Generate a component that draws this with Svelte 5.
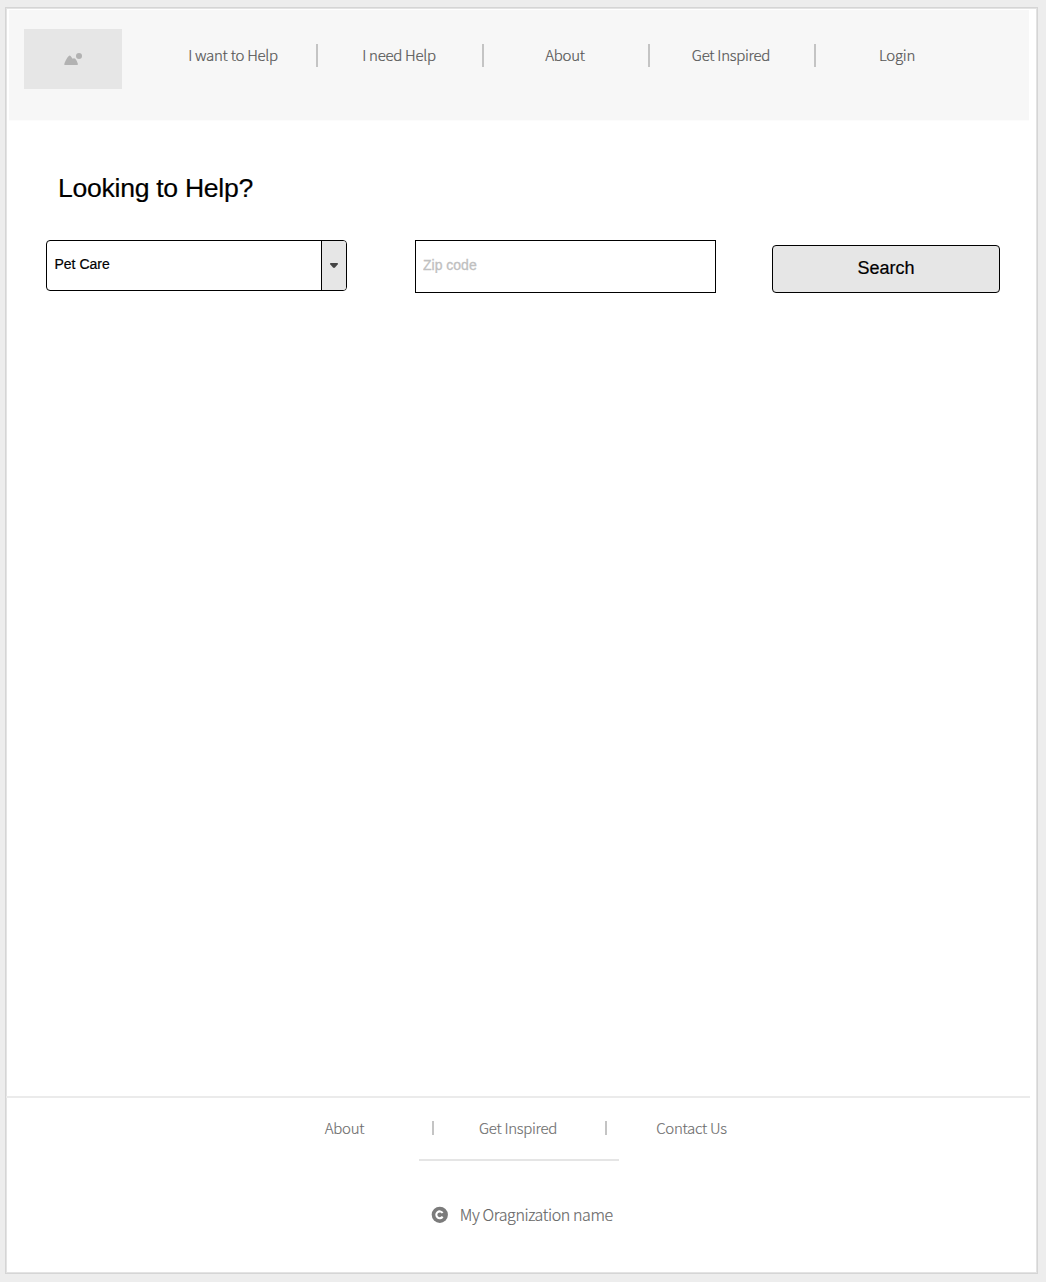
<script>
  const mainLinks = ['I want to Help', 'I need Help', 'About', 'Get Inspired', 'Login'];
  const footerLinks = ['About', 'Get Inspired', 'Contact Us'];
</script>

<div class="page">
  <header>
    <div class="logo">
      <svg width="18" height="12" viewBox="0 0 18 12" aria-hidden="true">
        <circle cx="15" cy="3" r="3" />
        <path d="M0.2 11.2 C1 8.4 3 4.6 4.8 2.9 Q5.7 2.1 6.6 3 L8.6 5.8 Q10 4.8 11.3 5.8 Q13.4 8.2 14 11.2 Q13.8 12 13 12 H1 Q0.1 12 0.2 11.2Z" />
      </svg>
    </div>
    <nav class="main-nav">
      {#each mainLinks as link}
        <span class="main-link">{link}</span>
      {/each}
    </nav>
  </header>

  <main>
    <h1>Looking to Help?</h1>
    <div class="search-row">
      <div class="select">
        <span class="value">Pet Care</span>
        <span class="toggle">
          <svg width="8" height="5" viewBox="0 0 8 5" aria-hidden="true">
            <path d="M0.7 0 H7.3 Q8.3 0.3 7.8 1.2 L5 4.5 Q4 5.3 3 4.5 L0.2 1.2 Q-0.3 0.3 0.7 0Z" />
          </svg>
        </span>
      </div>
      <input type="text" placeholder="Zip code" aria-label="Zip code" />
      <button type="button">Search</button>
    </div>
  </main>

  <footer>
    <nav class="footer-nav">
      {#each footerLinks as link}
        <span class="footer-link">{link}</span>
      {/each}
    </nav>
    <div class="rule"></div>
    <div class="copyright">
      <svg width="17" height="17" viewBox="0 0 17 17" aria-hidden="true">
        <circle cx="8.8" cy="8.8" r="8.1" fill="#7b7b7b" />
        <path d="M11.6 7 A3.4 3.4 0 1 0 11.6 10.6" fill="none" stroke="#fff" stroke-width="2.1" />
      </svg>
      <span>My Oragnization name</span>
    </div>
  </footer>
</div>

<style>
  :global(body) {
    margin: 0;
    background: #ededed;
  }

  .page {
    box-sizing: border-box;
    display: flex;
    flex-direction: column;
    width: 1033px;
    height: 1267px;
    margin: 7px 0 0 5px;
    border: 1px solid #d5d5d5;
    box-shadow: inset 0 0 0 1px #e3e3e3;
    background: #fff;
    font-family: 'Liberation Sans', Arial, sans-serif;
  }

  :global(#app) {
    display: flow-root;
  }

  header {
    box-sizing: border-box;
    display: flex;
    align-items: flex-start;
    width: 1020px;
    height: 110px;
    margin: 2px 0 0 3px;
    padding-left: 15px;
    background: #f7f7f7;
    border-bottom: 0;
    box-shadow: 0 1px 0 #fcfcfc;
  }

  .logo {
    display: flex;
    align-items: center;
    justify-content: center;
    width: 98px;
    height: 60px;
    margin-top: 19px;
    background: #e6e6e6;
  }

  .logo svg {
    fill: #b2b2b2;
  }

  .main-nav {
    display: flex;
    margin: 34px 0 0 28px;
  }

  .main-nav,
  .footer-nav,
  .copyright {
    font-family: 'Noto Sans CJK SC', 'Noto Sans', sans-serif;
    font-weight: 300;
    white-space: nowrap;
  }

  .main-link {
    box-sizing: border-box;
    width: 166px;
    height: 23px;
    padding-right: 2px;
    border-left: 2px solid #c4c4c4;
    color: #555;
    font-size: 15px;
    line-height: 22px;
    letter-spacing: -0.28px;
    text-align: center;
    -webkit-text-stroke: 0.2px #555;
  }

  .main-link:first-child {
    border-left-color: transparent;
  }

  main {
    flex: 1;
    padding: 51px 0 0 40px;
  }

  h1 {
    margin: 0 0 0 12px;
    color: #000;
    font-size: 26.6px;
    font-weight: 400;
    line-height: 34px;
    letter-spacing: -0.29px;
    -webkit-text-stroke: 0.2px #000;
  }

  .search-row {
    display: flex;
    align-items: flex-start;
    margin-top: 35px;
  }

  .select {
    box-sizing: border-box;
    display: flex;
    width: 301px;
    height: 51px;
    border: 1px solid #000;
    border-radius: 4px;
    overflow: hidden;
  }

  .value {
    flex: 1;
    padding-left: 7.5px;
    font-size: 14px;
    line-height: 47px;
    -webkit-text-stroke: 0.2px #000;
  }

  .toggle {
    display: flex;
    align-items: center;
    justify-content: center;
    width: 24px;
    border-left: 1px solid #000;
    background: #e6e6e6;
  }

  .toggle svg {
    fill: #444;
  }

  input {
    box-sizing: border-box;
    width: 301px;
    height: 53px;
    margin-left: 68px;
    padding: 0 8px 4px 7px;
    border: 1px solid #000;
    border-radius: 0;
    background: #fff;
    font: 14px 'Liberation Sans', Arial, sans-serif;
  }

  input::placeholder {
    color: #c0c0c0;
    opacity: 1;
    -webkit-text-stroke: 0.3px #c0c0c0;
  }

  button {
    box-sizing: border-box;
    width: 228px;
    height: 48px;
    margin: 5px 0 0 56px;
    padding: 0 0 2px;
    border: 1px solid #000;
    border-radius: 4px;
    background: #e6e6e6;
    color: #000;
    font: 18px 'Liberation Sans', Arial, sans-serif;
    -webkit-text-stroke: 0.2px #000;
  }

  footer {
    display: flex;
    flex-direction: column;
    align-items: center;
    width: 1024px;
    height: 175px;
    border-top: 2px solid #ebebeb;
  }

  .footer-nav {
    display: flex;
    align-items: center;
    height: 14px;
    margin-top: 23px;
  }

  .footer-link {
    box-sizing: border-box;
    width: 173px;
    height: 14px;
    padding-right: 2px;
    border-left: 2px solid #c4c4c4;
    color: #6c6c6c;
    font-size: 15px;
    line-height: 14px;
    letter-spacing: -0.3px;
    text-align: center;
    -webkit-text-stroke: 0.15px #6c6c6c;
  }

  .footer-link:first-child {
    padding-right: 3px;
    border-left-color: transparent;
  }

  .footer-link:last-child {
    padding-right: 1px;
  }

  .rule {
    width: 200px;
    height: 2px;
    margin: 24px 0 0 2px;
    background: #e5e5e5;
  }

  .copyright {
    display: flex;
    align-items: center;
    gap: 11.5px;
    height: 24px;
    margin: 41px 0 0 8px;
    color: #666;
    font-size: 16px;
    line-height: 24px;
    letter-spacing: -0.4px;
    -webkit-text-stroke: 0.15px #666;
  }
</style>
